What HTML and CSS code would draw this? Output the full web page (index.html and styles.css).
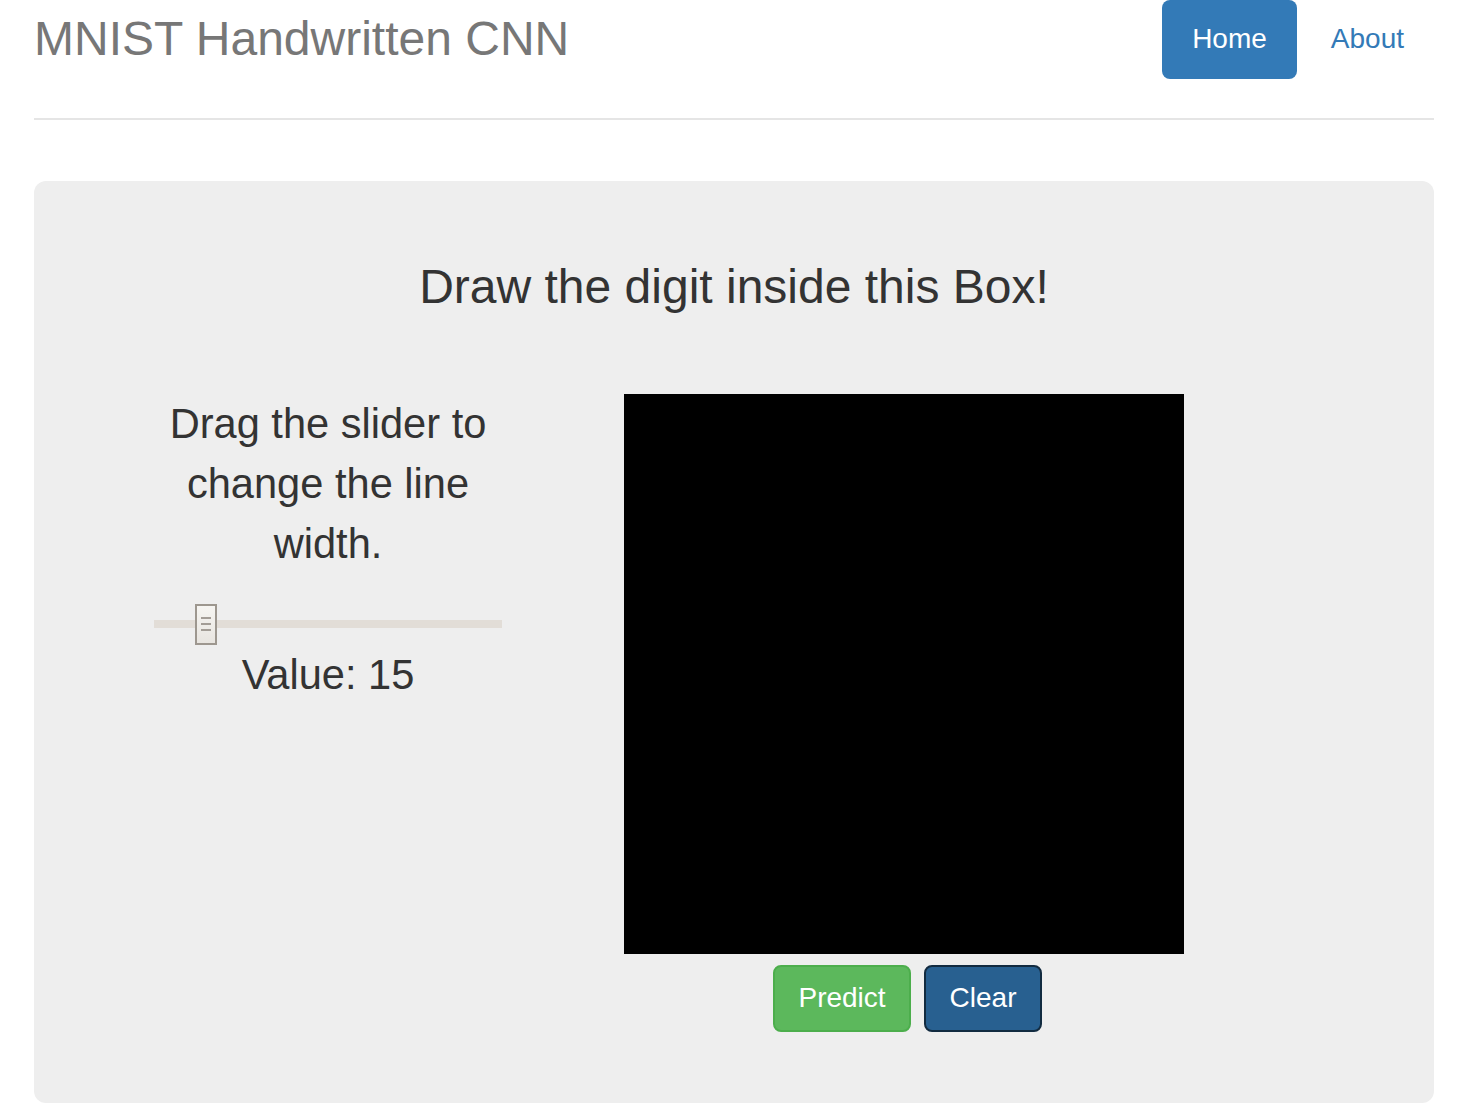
FILE: index.html
```html
<!DOCTYPE html>
<html lang="en">
<head>
<meta charset="utf-8">
<title>MNIST Handwritten CNN</title>
<link rel="stylesheet" href="styles.css">
</head>
<body>
<div class="container">
  <div class="header">
    <h3 class="brand">MNIST Handwritten CNN</h3>
    <ul class="nav">
      <li><a class="pill active" href="#">Home</a></li>
      <li><a class="pill" href="#">About</a></li>
    </ul>
  </div>
  <div class="jumbotron">
    <h1 class="lead-title">Draw the digit inside this Box!</h1>
    <div class="row">
      <div class="controls">
        <p class="hint">Drag the slider to change the line width.</p>
        <div class="slider">
          <div class="track"></div>
          <div class="thumb"><span></span><span></span><span></span></div>
        </div>
        <p class="value">Value: 15</p>
      </div>
      <div class="board">
        <div class="canvas"></div>
        <div class="actions">
          <button class="btn btn-success">Predict</button>
          <button class="btn btn-primary">Clear</button>
        </div>
      </div>
    </div>
  </div>
</div>
</body>
</html>
```

FILE: styles.css
```css
* { box-sizing: border-box; }
html, body { margin: 0; padding: 0; background: #fff; }
body {
  font-family: "Liberation Sans", Arial, Helvetica, sans-serif;
  color: #333;
}
.container {
  width: 1400px;
  margin-left: 34px;
}
.header {
  display: flex;
  justify-content: space-between;
  align-items: flex-start;
  height: 120px;
  border-bottom: 2px solid #e5e5e5;
}
.brand {
  margin: 13px 0 0 0;
  font-size: 48px;
  line-height: 52.8px;
  font-weight: 400;
  color: #777;
}
.nav {
  display: flex;
  list-style: none;
  margin: 0;
  padding: 0;
  gap: 4px;
}
.pill {
  display: block;
  padding: 19px 30px 21px;
  font-size: 28px;
  line-height: 39px;
  color: #337ab7;
  text-decoration: none;
  border-radius: 8px;
}
.pill.active {
  background: #337ab7;
  color: #fff;
}
.jumbotron {
  margin-top: 61px;
  background: #eee;
  border-radius: 12px;
  padding: 80px 0 71px;
}
.lead-title {
  margin: 0;
  text-align: center;
  font-size: 48px;
  line-height: 52.8px;
  font-weight: 400;
  color: #333;
}
.row {
  display: flex;
  margin-top: 80px;
  padding-left: 86px;
}
.controls {
  width: 416px;
  text-align: center;
  font-size: 41.6px;
  line-height: 60px;
}
.hint, .value { margin: 0; }
.hint { padding: 0 34px; }
.slider {
  position: relative;
  width: 348px;
  height: 41px;
  margin: 30px auto 0;
}
.track {
  position: absolute;
  left: 0;
  right: 0;
  top: 16px;
  height: 8px;
  background: #e2ddd7;
}
.thumb {
  position: absolute;
  left: 41px;
  top: 0;
  width: 22px;
  height: 41px;
  border: 2px solid #9d978f;
  background: linear-gradient(#f6f5f2, #e8e5e0);
  display: flex;
  flex-direction: column;
  align-items: center;
  justify-content: center;
  gap: 4px;
}
.thumb span {
  display: block;
  width: 10px;
  height: 2px;
  background: #a39d96;
}
.board {
  margin-left: 88px;
  width: 560px;
}
.canvas {
  width: 560px;
  height: 560px;
  background: #000;
}
.actions {
  display: flex;
  justify-content: center;
  gap: 13px;
  margin-top: 11px;
  padding-left: 7px;
}
.btn {
  font-family: "Liberation Sans", Arial, Helvetica, sans-serif;
  font-size: 28px;
  line-height: 40px;
  padding: 11px 23.5px 12px;
  border: 2px solid transparent;
  border-radius: 8px;
  color: #fff;
  cursor: pointer;
}
.btn-success {
  background: #5cb85c;
  border-color: #4cae4c;
}
.btn-primary {
  background: #286090;
  border-color: #122b40;
}
```
